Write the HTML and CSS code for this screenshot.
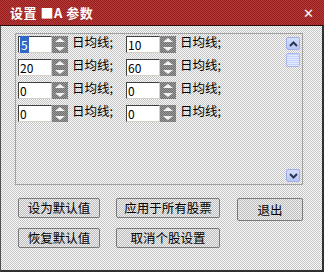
FILE: index.html
```html
<!DOCTYPE html>
<html lang="zh">
<head>
  <meta charset="UTF-8">
  <title>设置 MA 参数</title>
  <link rel="stylesheet" href="styles.css">
</head>
<body>
  <div class="window">
    <div class="titlebar">
      <span class="title">设置 ■A 参数</span>
      <span class="close">✕</span>
    </div>
    <div class="content">
      <!-- parameter list -->
      <div class="listbox">
        <div class="rows">
          <div class="row">
            <div class="field"><span class="input"><span class="sel">5</span></span><span class="spin"><i class="up"></i><i class="down"></i></span><span class="label">日均线;</span></div>
            <div class="field"><span class="input">10</span><span class="spin"><i class="up"></i><i class="down"></i></span><span class="label">日均线;</span></div>
          </div>
          <div class="row">
            <div class="field"><span class="input">20</span><span class="spin"><i class="up"></i><i class="down"></i></span><span class="label">日均线;</span></div>
            <div class="field"><span class="input">60</span><span class="spin"><i class="up"></i><i class="down"></i></span><span class="label">日均线;</span></div>
          </div>
          <div class="row">
            <div class="field"><span class="input">0</span><span class="spin"><i class="up"></i><i class="down"></i></span><span class="label">日均线;</span></div>
            <div class="field"><span class="input">0</span><span class="spin"><i class="up"></i><i class="down"></i></span><span class="label">日均线;</span></div>
          </div>
          <div class="row">
            <div class="field"><span class="input">0</span><span class="spin"><i class="up"></i><i class="down"></i></span><span class="label">日均线;</span></div>
            <div class="field"><span class="input">0</span><span class="spin"><i class="up"></i><i class="down"></i></span><span class="label">日均线;</span></div>
          </div>
        </div>
        <div class="scrollbar">
          <span class="sb-btn">
            <svg width="9" height="6" viewBox="0 0 9 6"><path d="M1 5 L4.5 1.5 L8 5" fill="none" stroke="#2a3550" stroke-width="2"/></svg>
          </span>
          <span class="sb-thumb"></span>
          <span class="sb-track"></span>
          <span class="sb-btn">
            <svg width="9" height="6" viewBox="0 0 9 6"><path d="M1 1 L4.5 4.5 L8 1" fill="none" stroke="#2a3550" stroke-width="2"/></svg>
          </span>
        </div>
      </div>

      <!-- buttons -->
      <div class="buttons">
        <div class="btn-col">
          <button class="btn w1">设为默认值</button>
          <button class="btn w1">恢复默认值</button>
        </div>
        <div class="btn-col">
          <button class="btn w2">应用于所有股票</button>
          <button class="btn w2">取消个股设置</button>
        </div>
        <div class="btn-col">
          <button class="btn w3">退出</button>
        </div>
      </div>
    </div>
  </div>
</body>
</html>
```

FILE: styles.css
```css
body {
  margin: 0;
  padding: 0;
  background: #fff;
  font-family: "Noto Sans CJK SC", "DejaVu Sans", sans-serif;
  font-size: 12px;
}

/* Dialog frame */
.window {
  width: 324px;
  height: 272px;
  box-sizing: border-box;
  border-left: 1px solid #505050;
  border-right: 2px solid #303030;
  border-bottom: 2px solid #303030;
  background: repeating-conic-gradient(#c4c4c4 0 25%, #fafafa 0 50%) 0 0 / 2px 2px;
  display: flex;
  flex-direction: column;
}

.titlebar {
  height: 25px;
  flex: none;
  margin-left: -1px;
  margin-right: -2px;
  background: repeating-conic-gradient(#ba3a3a 0 25%, #921e1e 0 50%) 0 0 / 2px 2px;
  border-bottom: 1px solid #2a0a0a;
  display: flex;
  align-items: center;
  justify-content: space-between;
  padding: 0 10px 0 10px;
  color: #fff;
}

.title {
  font-weight: bold;
  font-size: 13px;
  letter-spacing: 0.5px;
}

.close {
  font-size: 13px;
  font-weight: bold;
}

.content {
  padding: 7px 0 0 14px;
}

/* List box with rows of fields */
.listbox {
  width: 288px;
  height: 152px;
  box-sizing: border-box;
  border: 1px solid #a0a0a0;
  display: flex;
  justify-content: space-between;
}

.rows {
  padding: 2px 0 0 2px;
  display: flex;
  flex-direction: column;
  gap: 6px;
}

.row {
  display: flex;
}

.field {
  display: flex;
  width: 108px;
  height: 17px;
}

.input {
  width: 34px;
  height: 17px;
  box-sizing: border-box;
  background: #fff;
  border-top: 1px solid #404040;
  border-left: 1px solid #404040;
  border-right: 1px solid #d4d0c8;
  border-bottom: 1px solid #d4d0c8;
  padding-left: 1px;
  line-height: 15px;
  color: #000;
}

.sel {
  background: #3168c6;
  color: #fff;
  padding: 0 1px;
}

.spin {
  width: 16px;
  height: 17px;
  display: flex;
  flex-direction: column;
  background: repeating-conic-gradient(#6e6e6e 0 25%, #9c9c9c 0 50%) 0 0 / 2px 2px;
}

.spin i {
  flex: 1;
  display: flex;
  align-items: center;
  justify-content: center;
}

.spin i::after {
  content: "";
  width: 0;
  height: 0;
  border-left: 5px solid transparent;
  border-right: 5px solid transparent;
}

.spin .up::after {
  border-bottom: 4px solid #f4f4f4;
}

.spin .down::after {
  border-top: 4px solid #f4f4f4;
}

.label {
  margin-left: 4px;
  line-height: 12px;
  font-size: 12.5px;
  color: #000;
}

/* Scrollbar */
.scrollbar {
  width: 14px;
  margin: 3px 2px 2px 0;
  display: flex;
  flex-direction: column;
}

.sb-btn {
  height: 13px;
  box-sizing: border-box;
  border: 1px solid #9fb0e8;
  border-radius: 2px;
  background: linear-gradient(#d4defc, #b6c6f6);
  display: flex;
  align-items: center;
  justify-content: center;
}

.sb-thumb {
  height: 14px;
  margin-top: 3px;
  box-sizing: border-box;
  border: 1px solid #a8b8ec;
  border-radius: 2px;
  background: repeating-linear-gradient(#c6d2fa 0 1px, #e4eafe 1px 2px);
}

.sb-track {
  flex: 1;
}

/* Bottom buttons */
.buttons {
  display: flex;
  gap: 16px;
  padding: 13px 0 0 3px;
}

.btn-col {
  display: flex;
  flex-direction: column;
  gap: 10px;
}

.btn {
  height: 20px;
  box-sizing: border-box;
  font-family: inherit;
  font-size: 12.5px;
  line-height: 16px;
  padding: 0;
  color: #000;
  border: 1px solid #7a7a7a;
  border-radius: 2px;
  background: repeating-conic-gradient(#bcbcbc 0 25%, #f0f0f0 0 50%) 0 0 / 2px 2px;
}

.w1 { width: 82px; }
.w2 { width: 104px; }
.w3 { width: 66px; height: 23px; margin-left: 1px; }
```
